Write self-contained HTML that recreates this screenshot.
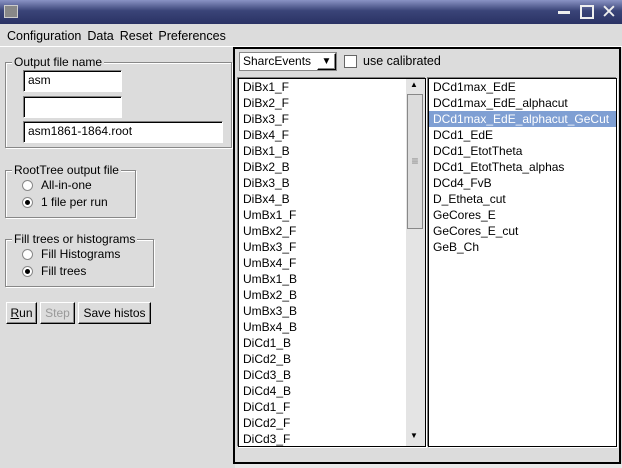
<!DOCTYPE html><html><head><style>
*{margin:0;padding:0;box-sizing:border-box}
body{width:622px;height:468px;background:#dcdcdc;font-family:"Liberation Sans",sans-serif;font-size:12px;color:#000;position:relative;overflow:hidden}
.a{position:absolute}
.title{left:0;top:0;width:622px;height:24px;background:linear-gradient(#8a93c4,#3a4478 45%,#2a3264);}
.menu span{margin-right:6px}
.in{background:#fff;border-top:1px solid #808080;border-left:1px solid #808080;border-right:1px solid #fff;border-bottom:1px solid #fff;box-shadow:inset 1px 1px 0 #000;padding:2px 4px;height:22px}
.grp{border:1px solid #888;box-shadow:1px 1px 0 #fff,inset 1px 1px 0 #fff}
.lg{background:#dcdcdc;padding:0 2px;top:-8px;left:6px}
.rad{width:11px;height:11px;border-radius:50%;background:#fff;border:1px solid #888}
.btn{border:1px solid #fff;border-right-color:#000;border-bottom-color:#000;box-shadow:inset -1px -1px 0 #888;height:22px;padding:3px 3px;text-align:center}
.list{background:#fff;border:1px solid #000;box-shadow:-1px -1px 0 #808080, 1px 1px 0 #fff}
.list div{height:16px;line-height:16px;padding-left:4px;white-space:nowrap}
</style></head><body>
<div class="a title"></div>
<div class="a" style="left:4px;top:5px;width:14px;height:13px;background:#888;border:1px solid #ccc"></div>
<div class="a" style="left:558px;top:11px;width:12px;height:3px;background:#eee"></div>
<div class="a" style="left:580px;top:5px;width:14px;height:14px;border:2px solid #eee"></div>
<div class="a" style="left:601px;top:1px;color:#eee;font-size:19px">✕</div>
<div class="a menu" style="left:7px;top:29px;font-size:12.5px;word-spacing:1px"><span>Configuration</span><span>Data</span><span>Reset</span><span>Preferences</span></div>
<div class="a" style="left:0;top:46px;width:622px;height:1px;background:#fff"></div>
<div class="a grp" style="left:5px;top:62px;width:227px;height:86px"><span class="a lg">Output file name</span></div>
<div class="a in" style="left:23px;top:70px;width:99px">asm</div>
<div class="a in" style="left:23px;top:96px;width:99px"></div>
<div class="a in" style="left:23px;top:121px;width:200px">asm1861-1864.root</div>
<div class="a grp" style="left:5px;top:170px;width:131px;height:48px"><span class="a lg">RootTree output file</span></div>
<div class="a rad" style="left:22px;top:180px"></div><div class="a" style="left:41px;top:178px">All-in-one</div>
<div class="a rad" style="left:22px;top:197px"><div style="width:5px;height:5px;background:#000;border-radius:50%;margin:2px"></div></div><div class="a" style="left:41px;top:195px">1 file per run</div>
<div class="a grp" style="left:5px;top:239px;width:149px;height:48px"><span class="a lg">Fill trees or histograms</span></div>
<div class="a rad" style="left:22px;top:249px"></div><div class="a" style="left:41px;top:247px">Fill Histograms</div>
<div class="a rad" style="left:22px;top:266px"><div style="width:5px;height:5px;background:#000;border-radius:50%;margin:2px"></div></div><div class="a" style="left:41px;top:264px">Fill trees</div>
<div class="a btn" style="left:6px;top:302px;width:31px"><u>R</u>un</div>
<div class="a btn" style="left:40px;top:302px;width:35px;color:#999">Step</div>
<div class="a btn" style="left:78px;top:302px;width:73px">Save histos</div>
<div class="a" style="left:233px;top:47px;width:388px;height:417px;border:2px solid #000;border-bottom-width:2px"></div>
<div class="a" style="left:235px;top:464px;width:387px;height:4px;background:#e8e8e8"></div>
<div class="a" style="left:239px;top:52px;width:98px;height:19px;background:#fff;border:1px solid #888;padding:1px 3px">SharcEvents</div>
<div class="a btn" style="left:317px;top:53px;width:19px;height:17px;padding:0;font-size:10px;line-height:15px">▼</div>
<div class="a" style="left:344px;top:55px;width:13px;height:13px;background:#fff;border:1px solid #666"></div>
<div class="a" style="left:363px;top:54px;font-size:12.5px">use calibrated</div>
<div class="a list" style="left:238px;top:78px;width:188px;height:369px;overflow:hidden">
<div>DiBx1_F</div><div>DiBx2_F</div><div>DiBx3_F</div><div>DiBx4_F</div><div>DiBx1_B</div><div>DiBx2_B</div><div>DiBx3_B</div><div>DiBx4_B</div><div>UmBx1_F</div><div>UmBx2_F</div><div>UmBx3_F</div><div>UmBx4_F</div><div>UmBx1_B</div><div>UmBx2_B</div><div>UmBx3_B</div><div>UmBx4_B</div><div>DiCd1_B</div><div>DiCd2_B</div><div>DiCd3_B</div><div>DiCd4_B</div><div>DiCd1_F</div><div>DiCd2_F</div><div>DiCd3_F</div>
</div>
<div class="a" style="left:406px;top:79px;width:19px;height:367px;background:#e4e4e4"></div>
<div class="a" style="left:410px;top:80px;font-size:8px">▲</div>
<div class="a" style="left:410px;top:431px;font-size:8px">▼</div>
<div class="a" style="left:407px;top:94px;width:16px;height:135px;border:1px solid #888;background:#dcdcdc;text-align:center;line-height:133px;color:#888">≡</div>
<div class="a list" style="left:428px;top:78px;width:189px;height:369px;overflow:hidden">
<div>DCd1max_EdE</div><div>DCd1max_EdE_alphacut</div><div style="background:#7f9fd3;color:#fff">DCd1max_EdE_alphacut_GeCut</div><div>DCd1_EdE</div><div>DCd1_EtotTheta</div><div>DCd1_EtotTheta_alphas</div><div>DCd4_FvB</div><div>D_Etheta_cut</div><div>GeCores_E</div><div>GeCores_E_cut</div><div>GeB_Ch</div>
</div>
</body></html>
